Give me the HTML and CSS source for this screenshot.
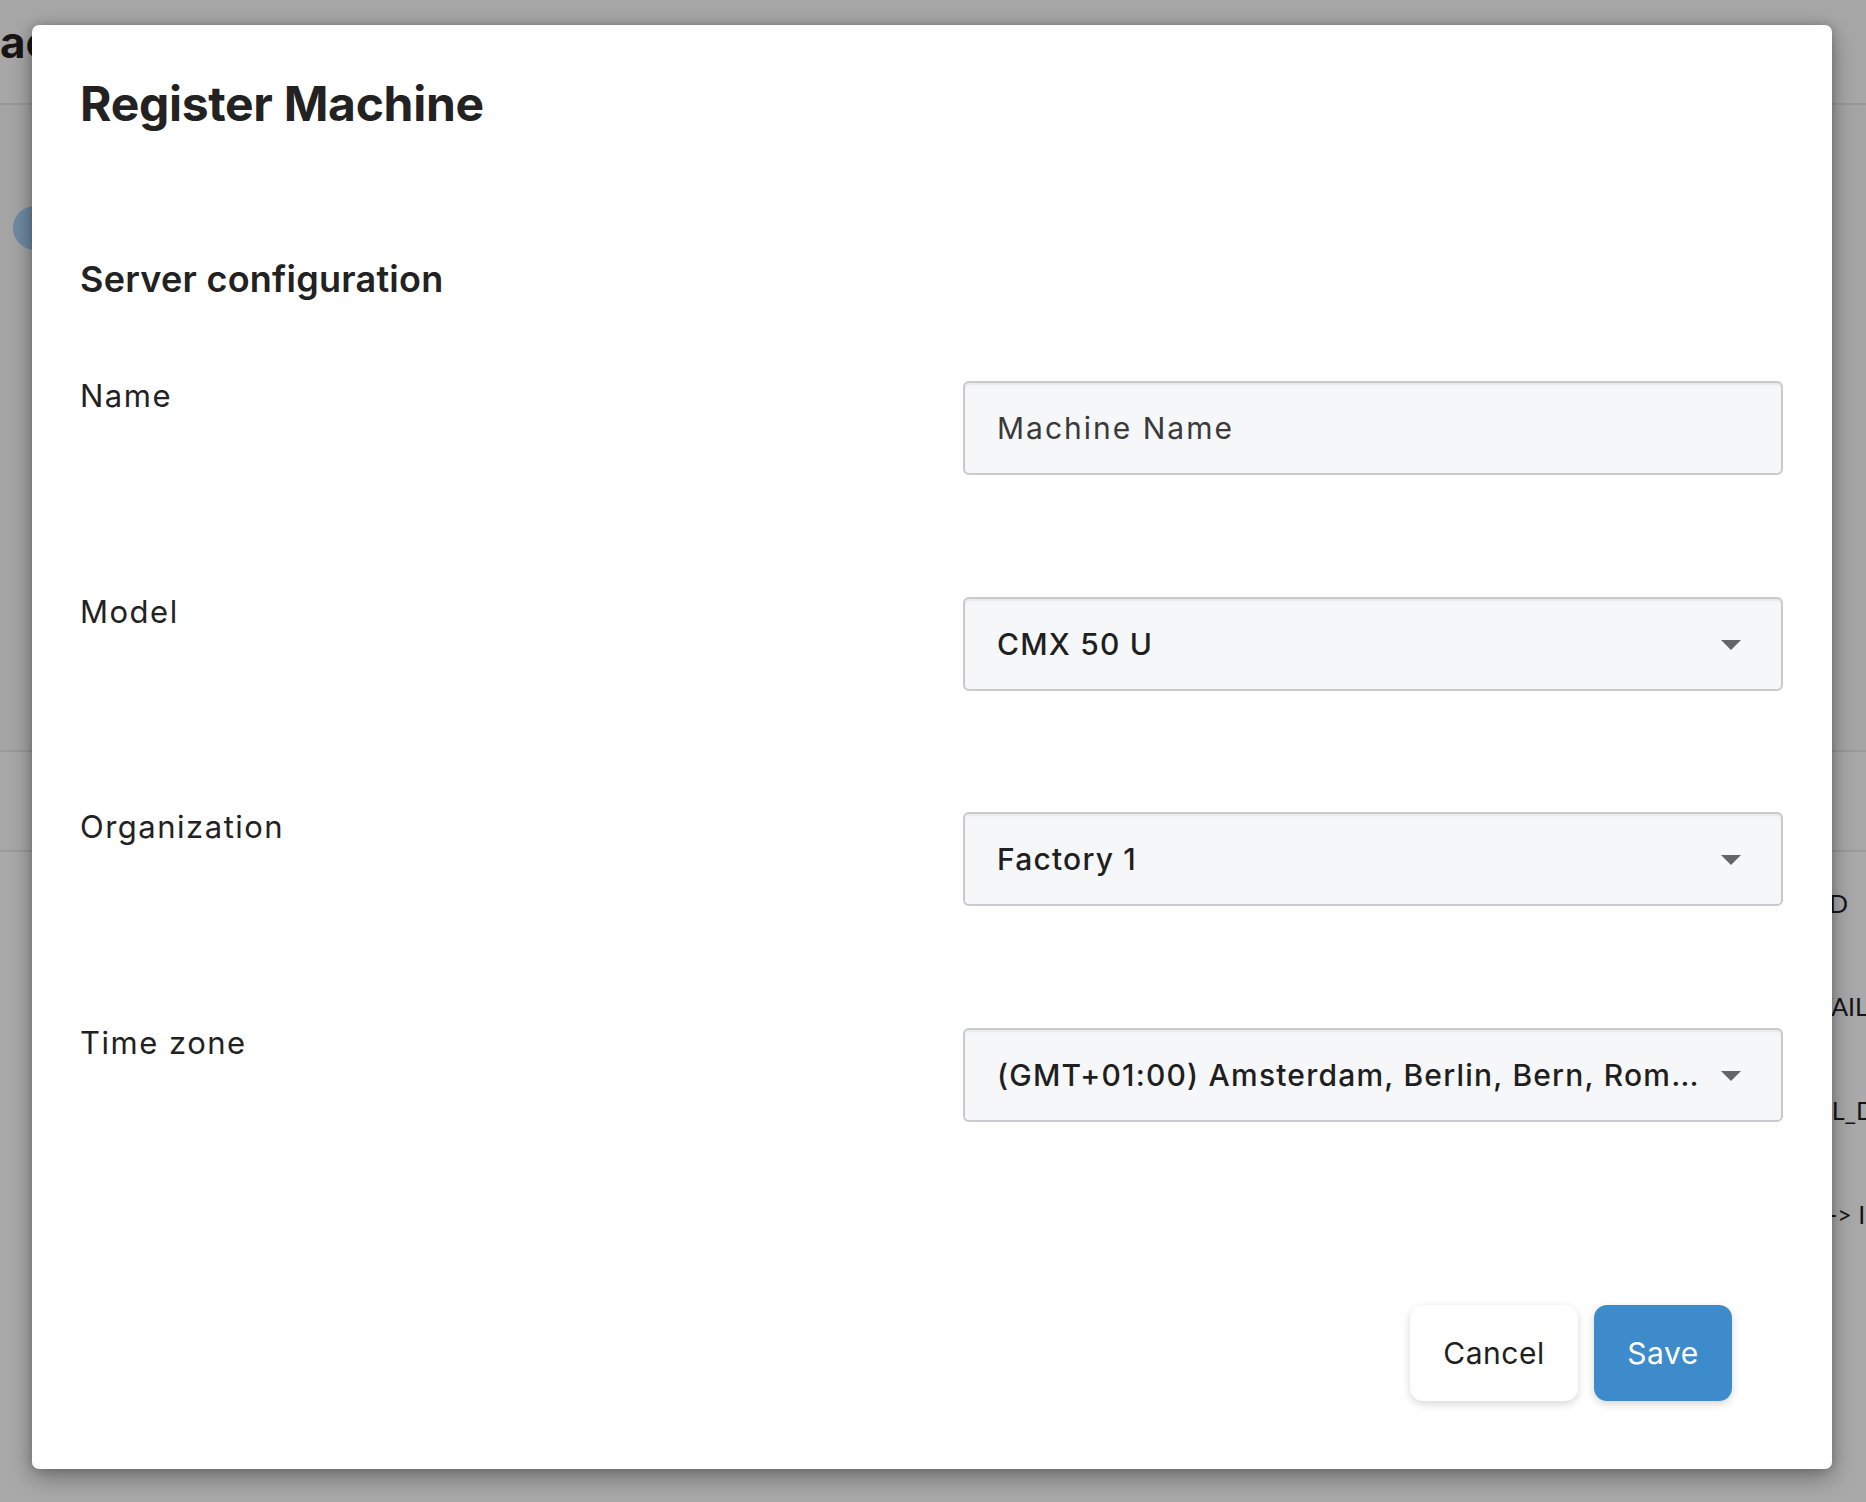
FILE: index.html
```html
<!DOCTYPE html>
<html lang="en">
<head>
<meta charset="utf-8">
<title>Register Machine</title>
<link rel="stylesheet" href="styles.css">
</head>
<body>
<div class="page">
  <header class="page-header"><h1 class="page-title">Machines</h1></header>
  <section class="page-intro"><span class="avatar"></span></section>
  <div class="page-tabs"></div>
  <div class="page-table">
    <div class="page-row"><span class="cell cell-a">ID</span></div>
    <div class="page-row"><span class="cell cell-b">AVAILABLE</span></div>
    <div class="page-row"><span class="cell cell-c">MODEL_DATA</span></div>
    <div class="page-row"><span class="cell cell-d">-&gt; IN</span></div>
  </div>
</div>

<div class="modal" role="dialog" aria-labelledby="modal-title">
  <h2 class="modal-title" id="modal-title">Register Machine</h2>
  <h3 class="section-title">Server configuration</h3>
  <div class="form">
    <div class="form-row">
      <label class="form-label">Name</label>
      <div class="field field-input"><span class="field-text placeholder">Machine Name</span></div>
    </div>
    <div class="form-row">
      <label class="form-label">Model</label>
      <div class="field field-select"><span class="field-text">CMX 50 U</span><span class="caret"></span></div>
    </div>
    <div class="form-row">
      <label class="form-label">Organization</label>
      <div class="field field-select"><span class="field-text">Factory 1</span><span class="caret"></span></div>
    </div>
    <div class="form-row">
      <label class="form-label">Time zone</label>
      <div class="field field-select"><span class="field-text">(GMT+01:00) Amsterdam, Berlin, Bern, Rome, Stockholm, Vienna</span><span class="caret"></span></div>
    </div>
  </div>
  <div class="modal-footer">
    <button class="btn btn-cancel">Cancel</button>
    <button class="btn btn-save">Save</button>
  </div>
</div>
</body>
</html>
```

FILE: styles.css
```css
* { box-sizing: border-box; }

html, body {
  margin: 0;
  padding: 0;
  width: 1866px;
  height: 1502px;
  overflow: hidden;
  background: #a9a9a9;
  font-family: "Inter", "Noto Sans", sans-serif;
  color: #222;
}

/* ---------- dimmed background page ---------- */
.page {
  width: 1866px;
  height: 1502px;
}

.page-header {
  height: 105px;
  border-bottom: 2px solid #999;
  padding-top: 16px;
  background: #a7a7a7;
}

.page-title {
  margin: 0 0 0 -41px;
  width: 75px;
  overflow: hidden;
  white-space: nowrap;
  font-size: 44px;
  font-weight: 700;
  line-height: 1.21;
  color: #161616;
}

.page-intro {
  height: 645px;
  padding: 101px 0 0 13px;
  background: #a5a5a5;
}

.avatar {
  display: block;
  width: 44px;
  height: 44px;
  border-radius: 50%;
  background: #6f8aa3;
}

.page-tabs {
  height: 102px;
  border-top: 2px solid #9a9a9a;
  border-bottom: 2px solid #9a9a9a;
  background: #a8a8a8;
}

.page-row {
  height: 104px;
  display: flex;
  align-items: center;
  font-family: "Lato", sans-serif;
  font-size: 25px;
  color: #151515;
  white-space: nowrap;
}

.page-row:first-child { height: 102px; }

.cell-a { margin-left: 1822px; }
.cell-b { margin-left: 1800px; }
.cell-c { margin-left: 1755px; }
.cell-d { margin-left: 1828px; }

/* ---------- modal ---------- */
.modal {
  position: absolute;
  left: 32px;
  top: 25px;
  width: 1800px;
  height: 1444px;
  background: #fff;
  border-radius: 7px;
  box-shadow: 0 8px 24px rgba(0, 0, 0, 0.35), 0 0 10px rgba(0, 0, 0, 0.18);
  padding: 50px 49px 68px 48px;
  display: flex;
  flex-direction: column;
}

.modal-title {
  margin: 0;
  font-size: 48px;
  font-weight: 700;
  line-height: 58px;
  color: #222;
  letter-spacing: -0.3px;
}

.section-title {
  margin: 125px 0 0;
  font-size: 36px;
  font-weight: 600;
  line-height: 42px;
  color: #222;
  letter-spacing: 0.25px;
}

.form {
  margin-top: 81px;
  display: flex;
  flex-direction: column;
  gap: 121.5px;
}

.form-row {
  display: grid;
  grid-template-columns: 1fr 820px;
  align-items: start;
}

.form-label {
  font-size: 31px;
  line-height: 36px;
  margin-top: -3px;
  letter-spacing: 1.5px;
  color: #222;
}

.field {
  height: 94px;
  background: #f6f7f9;
  border: 2px solid #c9cacd;
  border-radius: 6px;
  box-shadow: inset 0 2px 2px rgba(0, 0, 0, 0.06);
  display: flex;
  align-items: center;
  padding: 0 40px 0 32px;
  gap: 20px;
}

.field-text {
  flex: 1;
  min-width: 0;
  font-size: 30px;
  font-weight: 500;
  color: #1f1f1f;
  white-space: nowrap;
  overflow: hidden;
  text-overflow: ellipsis;
  letter-spacing: 1.2px;
}

.field-text.placeholder {
  font-weight: 400;
  color: #3a3a3a;
  letter-spacing: 2px;
}

.caret {
  flex: none;
  width: 0;
  height: 0;
  border-left: 10px solid transparent;
  border-right: 10px solid transparent;
  border-top: 10px solid #656565;
  margin-top: 2px;
}

.modal-footer {
  margin-top: auto;
  display: flex;
  justify-content: flex-end;
  gap: 16px;
  padding-right: 51px;
}

.btn {
  height: 96px;
  border: none;
  border-radius: 13px;
  font-family: "Inter", "Noto Sans", sans-serif;
  font-size: 30px;
  font-weight: 400;
  padding: 0 32px;
  box-shadow: 0 3px 8px rgba(0, 0, 0, 0.16);
  cursor: pointer;
}

.btn-cancel {
  width: 168px;
  background: #fff;
  color: #1f1f1f;
  letter-spacing: 0.5px;
}

.btn-save {
  width: 138px;
  background: #3d8bcb;
  color: #fff;
  letter-spacing: 0.5px;
}
```
